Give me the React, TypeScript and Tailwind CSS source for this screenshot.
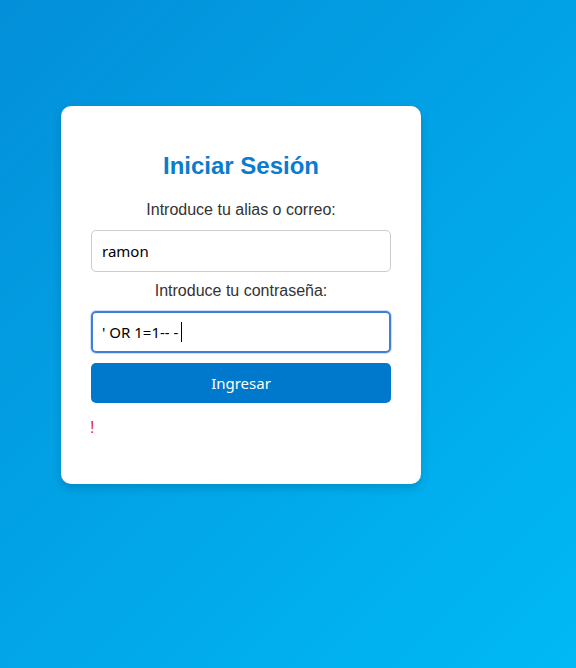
export default function App() {
    return (
        <div className="min-h-[668px] w-full bg-[linear-gradient(135deg,#038fd9,#00b9f5)] pt-[106px] pl-[61px]">
            <div className="w-[360px] rounded-[10px] bg-white px-[30px] pt-[30px] pb-[30px] shadow-[0_4px_10px_rgba(0,0,0,0.15)] font-['Liberation_Sans',Arial,sans-serif]">
                <h2 className="mt-4 text-center text-[24px] leading-[28px] font-bold text-[#0a7cd0]">
                    Iniciar Sesión
                </h2>
                <label className="mt-5 block text-center text-[16px] leading-5 text-[#333]">
                    Introduce tu alias o correo:
                </label>
                <input
                    readOnly
                    value="ramon"
                    className="mt-[10px] block h-[42px] w-full rounded-[5px] border border-[#ccc] px-[10px] text-[15px] text-black font-['Noto_Sans',sans-serif] outline-none"
                />
                <label className="mt-[9px] block text-center text-[16px] leading-5 text-[#333]">
                    Introduce tu contraseña:
                </label>
                <div className="mt-[10px] flex h-[42px] w-full items-center rounded-[5px] border-2 border-[#3f80d6] px-[9px] text-[15px] text-black font-['Noto_Sans',sans-serif] shadow-[0_0_0_1px_rgba(63,128,214,0.25)]">
                    <span>' OR 1=1-- -</span>
                    <span className="ml-[3px] inline-block h-[20px] w-px bg-black" />
                </div>
                <button
                    type="button"
                    className="mt-[10px] block h-10 w-full rounded-[5px] bg-[#0079cc] text-[15px] text-white font-['Noto_Sans',sans-serif]"
                >
                    Ingresar
                </button>
                <p className="mt-[15px] mb-4 -ml-px text-[16px] leading-5 text-[#e0282c]">!</p>
            </div>
        </div>
    )
}
